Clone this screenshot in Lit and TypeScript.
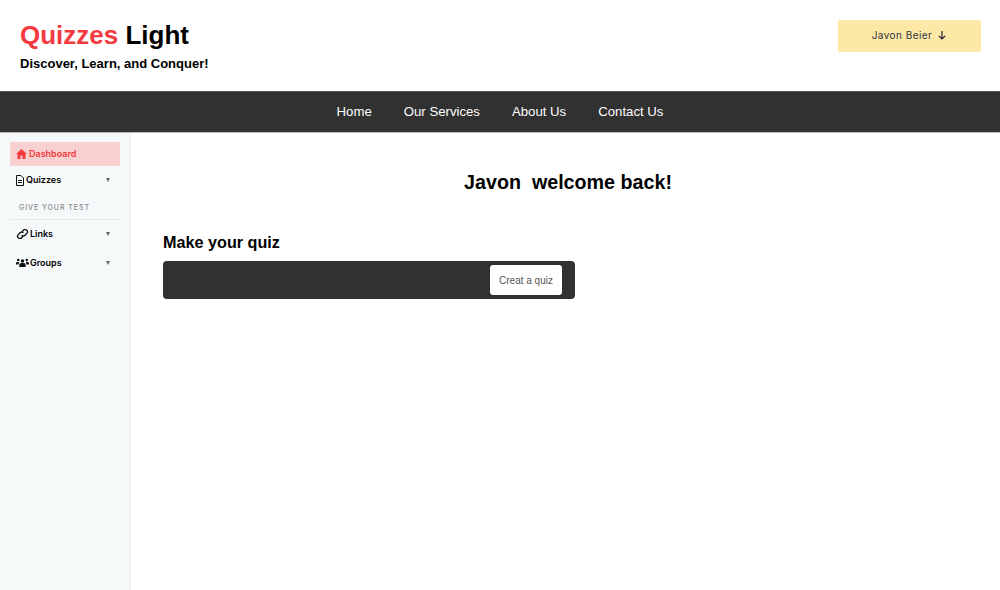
import { LitElement, html, css } from "lit";
import { customElement } from "lit/decorators.js";

const caret = html`<span class="caret"></span>`;

@customElement("app-root")
export class AppRoot extends LitElement {
  static styles = css`
    :host { display: block; width: 1000px; height: 590px; overflow: hidden; background: #fff; font-family: "Liberation Sans", Arial, sans-serif; color: #000; }
    .top { height: 91px; box-sizing: border-box; display: flex; justify-content: space-between; padding: 20px 19px 0 20px; }
    .brand h1 { margin: 0; font-size: 26px; line-height: 30px; font-weight: 700; }
    .brand h1 span { color: #f43a3f; }
    .brand p { margin: 6px 0 0; font-size: 13px; line-height: 16px; font-weight: 700; }
    .user { width: 143px; height: 32px; background: #fde9a5; border-radius: 2px; display: flex; align-items: center; justify-content: center; gap: 5px; font-family: Inter, sans-serif; font-size: 10px; letter-spacing: .45px; color: #33333f; padding-bottom: 2px; box-sizing: border-box; }
    .user svg { display: block; }
    nav { height: 42px; box-sizing: border-box; background: #313131; border-top: 1px solid #555; border-bottom: 1px solid #bbb; display: flex; justify-content: center; align-items: center; gap: 32px; color: #fff; font-size: 13.200px; padding-bottom: 2px; }
    .body { display: flex; height: 457px; }
    aside { width: 131px; box-sizing: border-box; background: #f6f9fa; border-right: 2px solid #eef0f2; padding: 9px 9px 0 10px; font-family: Inter, sans-serif; font-size: 9px; font-weight: 600; }
    .item { display: flex; align-items: center; height: 24px; padding: 0 6px; gap: 2px; position: relative; line-height: 22px; box-sizing: border-box; }
    .item.active { background: #f8d0cf; color: #f43a3f; padding-bottom: 1px; }
    .item svg { display: block; flex: none; }
    .item svg.wide { margin-right: -1px; }
    .caret { position: absolute; right: 10px; top: 10px; border-left: 2.500px solid transparent; border-right: 2.500px solid transparent; border-top: 4px solid #666; }
    .q { margin-top: 2px; }
    .hint { display: flex; align-items: center; padding: 4px 9px 0; font-size: 7px; font-weight: 500; letter-spacing: .95px; color: #888; border-bottom: 1px solid #e6e8ea; box-sizing: border-box; height: 28px; }
    .links { margin-top: 2px; }
    .groups { margin-top: 5px; }
    main { flex: 1; padding: 37px 0 0 32px; }
    h2 { margin: 0 0 0 -32px; padding-left: 5px; text-align: center; font-size: 19.700px; line-height: 24px; font-weight: 700; white-space: pre; }
    h3 { margin: 38px 0 0; font-size: 16.200px; line-height: 20px; font-weight: 700; }
    .bar { margin-top: 9px; width: 412px; height: 38px; box-sizing: border-box; background: #313131; border-radius: 4px; padding: 4px 13px 0 0; display: flex; justify-content: flex-end; align-items: flex-start; }
    .btn { width: 72px; height: 30px; background: #fff; border-radius: 3px; display: flex; align-items: center; justify-content: center; font-size: 10px; color: #555; }
  `;

  render() {
    return html`
      <div class="top">
        <div class="brand">
          <h1><span>Quizzes</span> Light</h1>
          <p>Discover, Learn, and Conquer!</p>
        </div>
        <div class="user">Javon Beier
          <svg width="10" height="10" viewBox="0 0 10 10" fill="none" stroke="#222238" stroke-width="1.2"><path d="M5 1v8M1.800 5.800 5 9l3.200-3.200"/></svg>
        </div>
      </div>
      <nav><span>Home</span><span>Our Services</span><span>About Us</span><span>Contact Us</span></nav>
      <div class="body">
        <aside>
          <div class="item active">
            <svg width="11" height="10" viewBox="0 0 11 10" fill="#f43a3f"><path d="M5.500 0 11 5H9.500v5H6.500V6.500h-2V10H1.500V5H0z"/></svg>Dashboard
          </div>
          <div class="item q">
            <svg width="8" height="11" viewBox="0 0 8 11" fill="none" stroke="#111" stroke-width="1"><path d="M.5.500h4.500l2.500 2.500v7.500h-7zM2 5.500h4M2 7.500h4"/></svg>Quizzes${caret}
          </div>
          <div class="hint">GIVE YOUR TEST</div>
          <div class="item links">
            <svg class="wide" width="13" height="10" viewBox="0 0 13 10" fill="none" stroke="#111" stroke-width="1.300"><path d="M5.500 3.200 7.200 1.500a2.300 2.300 0 0 1 3.800 2.700L9 6.200a2.300 2.300 0 0 1-3.400 0M7.500 6.800 5.800 8.500A2.300 2.300 0 0 1 2 5.800L4 3.800a2.300 2.300 0 0 1 3.400 0"/></svg>Links${caret}
          </div>
          <div class="item groups">
            <svg class="wide" width="13" height="10" viewBox="0 0 13 10" fill="#111"><circle cx="6.500" cy="3" r="1.700"/><circle cx="2.200" cy="2" r="1.300"/><circle cx="10.800" cy="2" r="1.300"/><path d="M3.300 9V7a2 2 0 0 1 2-2h2.400a2 2 0 0 1 2 2v2zM0 6.500V5a1.300 1.300 0 0 1 1.300-1h1.900L2.500 6.500zM13 6.500V5a1.300 1.300 0 0 0-1.300-1H9.800l.7 2.500z"/></svg>Groups${caret}
          </div>
        </aside>
        <main>
          <h2>Javon  welcome back!</h2>
          <h3>Make your quiz</h3>
          <div class="bar"><div class="btn">Creat a quiz</div></div>
        </main>
      </div>
    `;
  }
}
